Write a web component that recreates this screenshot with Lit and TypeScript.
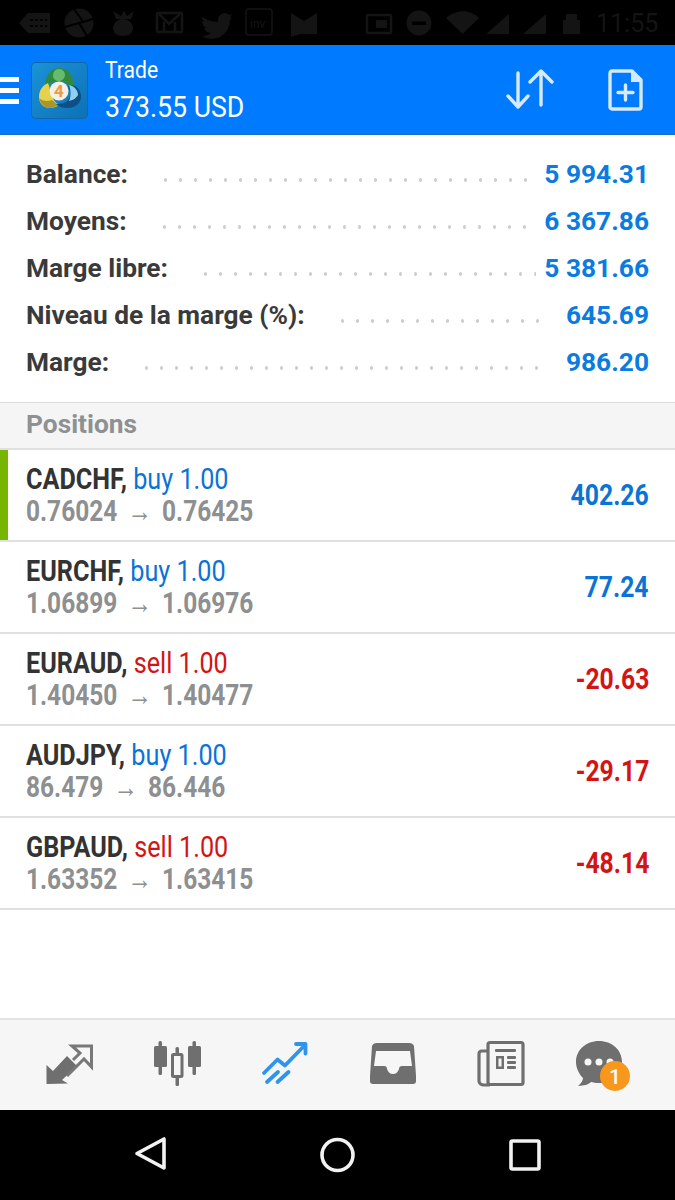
import { LitElement, html, css, svg } from "lit";
import { customElement } from "lit/decorators.js";

const summary = [
  { k: "Balance:", v: "5 994.31" },
  { k: "Moyens:", v: "6 367.86" },
  { k: "Marge libre:", v: "5 381.66" },
  { k: "Niveau de la marge (%):", v: "645.69" },
  { k: "Marge:", v: "986.20" },
];
const rows = [
  { s: "CADCHF,", side: "buy", a: "0.76024", b: "0.76425", p: "402.26", active: true },
  { s: "EURCHF,", side: "buy", a: "1.06899", b: "1.06976", p: "77.24" },
  { s: "EURAUD,", side: "sell", a: "1.40450", b: "1.40477", p: "-20.63" },
  { s: "AUDJPY,", side: "buy", a: "86.479", b: "86.446", p: "-29.17" },
  { s: "GBPAUD,", side: "sell", a: "1.63352", b: "1.63415", p: "-48.14" },
];

const statusLeft = svg`
  <path d="M19 23l9-10h22v20H28z"/>
  <path d="M30 20h17M30 26h17" stroke="#000" stroke-width="2" stroke-dasharray="3 2"/>
  <circle cx="79" cy="23" r="14.500"/>
  <path d="M74 9l10 14M93 19l-14 4M87 36l-8-13M65 27l14-4M69 12v0" stroke="#000" stroke-width="2"/>
  <path d="M113 11l8 5 3-5 3 5 7-5-3 8h-15zM123 19c6 0 10 5 10 9 0 5-4 8-10 8s-10-3-10-8c0-4 4-9 10-9z"/>
  <rect x="157" y="13" width="25" height="19" rx="1" fill="none" stroke="#141414" stroke-width="2.500"/>
  <path d="M159 14l10 10 11-10M164 31v-9M175 31v-9" fill="none" stroke="#141414" stroke-width="2.500"/>
  <path d="M202 17c5 3 11 5 16 5-1-5 3-9 7-9 2 0 3 1 4 2l3-1-2 4 2-1-2 3c0 10-8 19-18 19-4 0-7-1-10-3 3 0 7-1 9-3-4 0-6-3-7-5h3c-3-1-5-4-5-7l3 1c-3-2-4-5-3-5z"/>
  <rect x="246" y="9" width="26" height="26" rx="3" fill="none" stroke="#141414" stroke-width="1.500"/>
  <text x="250" y="28" font-family="Roboto, sans-serif" font-size="12" fill="#141414">inv</text>
  <path d="M291 13l13 8 13-8v21h-17l-9 3z"/>
`;
const statusRight = svg`
  <rect x="367" y="15" width="24" height="18" rx="1" fill="none" stroke="#141414" stroke-width="2.500"/>
  <rect x="376" y="20" width="11" height="8"/>
  <circle cx="419" cy="23" r="12.500"/>
  <rect x="412" y="21.500" width="14" height="3.500" fill="#000"/>
  <path d="M446 18c10-9 24-9 33 0l-16.500 16z"/>
  <path d="M486 34l23-20v20zM523 34l23-20v20z"/>
  <path d="M566 14h11v6h3v14h-17V20h3z"/>
  <text x="596" y="32" font-family="Roboto, sans-serif" font-size="25" fill="#141414">11:55</text>
`;

@customElement("app-root")
export class AppRoot extends LitElement {
  static styles = css`
    :host { display: flex; flex-direction: column; height: 1200px; width: 675px; overflow: hidden; background: #fff; font-family: Roboto, "Liberation Sans", sans-serif; }
    .status { height: 45px; background: #000; flex: none; display: block; }
    .status svg { display: block; fill: #141414; }
    .top { height: 90px; flex: none; background: #007aff; display: flex; align-items: center; color: #fff; border-bottom: 1px solid #1a6fc4; box-sizing: border-box; }
    .burger { width: 19px; margin: 2px 12px 0 0; display: flex; flex-direction: column; gap: 6px; flex: none; }
    .burger i { height: 5px; background: #fff; display: block; }
    .logo { width: 57px; height: 57px; margin-top: 1px; border-radius: 5px; background: linear-gradient(135deg, #1b93d8, #0d70b6); box-shadow: inset 0 0 0 1px #1167a8; flex: none; }
    .logo svg { display: block; }
    .title { margin-left: 17px; flex: 1; display: flex; flex-direction: column; gap: 4px; white-space: nowrap; }
    .t1, .t2 { display: block; transform-origin: left center; }
    .t1 { font-size: 24px; line-height: 30px; transform: scaleX(.88); }
    .t2 { font-size: 29px; line-height: 36px; transform: scaleX(.92); }
    .acts { display: flex; align-items: center; gap: 54px; margin-right: 31px; }
    .acts svg { display: block; }

    .summary { height: 268px; flex: none; box-sizing: border-box; padding-top: 15px; display: flex; flex-direction: column; border-bottom: 1px solid #dcdcdc; }
    .sr { height: 47px; flex: none; display: flex; align-items: center; padding: 0 26px; font-size: 26.300px; font-weight: 700; white-space: nowrap; }
    .sk { color: #3a3a3a; }
    .dots { flex: 1; align-self: center; height: 4px; margin: 12px 8px 0 30px; background-image: radial-gradient(circle, #cfcfcf 1.500px, transparent 2px); background-size: 15px 4px; background-repeat: repeat-x; }
    .dots.short { margin-right: 18px; }
    .sv { color: #0a7be0; }

    .phead { height: 47px; flex: none; box-sizing: border-box; background: #f5f5f5; border-bottom: 2px solid #e0e0e0; display: flex; align-items: center; padding: 0 0 3px 26px; font-size: 26.300px; font-weight: 700; color: #8d9191; }
    .list { flex: 1; }
    .row { height: 92px; box-sizing: border-box; border-bottom: 2px solid #e0e0e0; display: flex; align-items: center; padding: 0 26px 1px; white-space: nowrap; }
    .row.on { box-shadow: inset 8px 0 0 #78b500; }
    .lines { flex: 1; display: flex; flex-direction: column; }
    .l { display: block; font-size: 30px; transform-origin: left center; }
    .l1 { color: #333; font-weight: 700; line-height: 33px; transform: scaleX(.84); }
    .l1 span { font-weight: 400; }
    .buy { color: #0a73d6; }
    .sell { color: #d31414; }
    .l2 { color: #8d8f90; font-weight: 700; line-height: 32px; transform: scaleX(.815); }
    .l2 em { font-style: normal; font-weight: 400; margin: 0 5px; }
    .pl { font-size: 30px; font-weight: 700; transform: scaleX(.825); transform-origin: right center; }
    .pos { color: #0a73d6; }
    .neg { color: #d31414; }

    .tabs { height: 92px; flex: none; box-sizing: border-box; background: #f6f6f6; border-top: 2px solid #e2e2e2; }
    .tabs svg { display: block; }
    .nav { height: 90px; flex: none; background: #000; }
    .nav svg { display: block; }
  `;

  render() {
    return html`
      <div class="status">
        <svg width="675" height="45" viewBox="0 0 675 45">${statusLeft}${statusRight}</svg>
      </div>
      <div class="top">
        <div class="burger"><i></i><i></i><i></i></div>
        <div class="logo">
          <svg width="57" height="57" viewBox="0 0 57 57">
            <path d="M28 6c9 0 14 7 15 17l-3 3c-3-4-7-7-12-7s-9 2-12 6l-2-2c1-10 6-17 14-17z" fill="#2f8a40"/>
            <path d="M28 7c4 0 6 3 6 7-1 3-3 5-6 5s-6-2-6-5c0-4 2-7 6-7z" fill="#66bb6e"/>
            <path d="M8 35c0-7 4-12 9-14 2 4 2 9 4 13 1 4 4 7 7 9-4 3-10 4-14 2-4-2-6-6-6-10z" fill="#e6d14a"/>
            <path d="M8 36c3 3 8 4 13 2l6 5c-4 3-9 4-13 2-3-2-5-5-6-9z" fill="#a8952c"/>
            <path d="M37 24c7-3 12 3 13 9 1 7-5 13-13 13-5 0-9-1-12-4 5 0 10-1 12-4 2-3 3-6 2-9z" fill="#0f4f86"/>
            <path d="M38 23c5 1 9 5 9 10-2 3-4 5-9 6 2-4 2-11 0-16z" fill="#8fd0ee"/>
            <circle cx="28" cy="29" r="9.500" fill="#f6efe6"/>
            <text x="28" y="35" text-anchor="middle" font-family="Roboto, sans-serif" font-size="17" font-weight="700" fill="#ef9a3c">4</text>
          </svg>
        </div>
        <div class="title"><span class="t1">Trade</span><span class="t2">373.55 USD</span></div>
        <div class="acts">
          <svg width="48" height="42" viewBox="0 0 48 42" fill="none" stroke="#d6e9ff" stroke-width="3.400" stroke-linecap="round" stroke-linejoin="round">
            <path d="M12 4v34M2 27l10 11 10-11"/><path d="M35 36V2M24 13L35 2l11 11"/>
          </svg>
          <svg width="36" height="42" viewBox="0 0 36 42">
            <path d="M4 2h20l9 9v27a2 2 0 0 1-2 2H4a2 2 0 0 1-2-2V4a2 2 0 0 1 2-2z" fill="none" stroke="#d6e9ff" stroke-width="3.400" stroke-linejoin="round"/>
            <path d="M23 2l11 11H23z" fill="#d6e9ff"/>
            <path d="M17.500 16v15M10 23.500h15" stroke="#d6e9ff" stroke-width="3.400" stroke-linecap="round"/>
          </svg>
        </div>
      </div>
      <div class="summary">
        ${summary.map(
          (r) => html`<div class="sr"><span class="sk">${r.k}</span><span class="dots ${r.v.length < 8 ? "short" : ""}"></span><span class="sv">${r.v}</span></div>`
        )}
      </div>
      <div class="phead">Positions</div>
      <div class="list">
        ${rows.map(
          (r) => html`<div class="row ${r.active ? "on" : ""}">
            <div class="lines">
              <span class="l l1">${r.s} <span class=${r.side}>${r.side} 1.00</span></span>
              <span class="l l2">${r.a} <em>→</em> ${r.b}</span>
            </div>
            <span class="pl ${r.p.startsWith("-") ? "neg" : "pos"}">${r.p}</span>
          </div>`
        )}
      </div>
      <div class="tabs">
        <svg width="675" height="90" viewBox="0 1020 675 90">
          <path d="M46.500 1084v-19l6.500 6 14-15 10 10-15 14 6 3.500z" fill="#6f6f6f"/>
          <path d="M73 1060l7-7-8-7h19.500v21l-7.500-8-17 17" fill="none" stroke="#787878" stroke-width="3"/>
          <g fill="#6f6f6f">
            <rect x="158.500" y="1041" width="3.500" height="34" rx="1.500"/><rect x="154" y="1046" width="13" height="21" rx="1.500"/>
            <rect x="192.500" y="1041" width="3.500" height="34" rx="1.500"/><rect x="188" y="1046" width="13" height="21" rx="1.500"/>
            <rect x="175.500" y="1047" width="3.500" height="39" rx="1.500"/>
            <rect x="172.500" y="1054.500" width="9.500" height="22" rx="1" fill="#f6f6f6" stroke="#6f6f6f" stroke-width="3"/>
          </g>
          <g fill="none" stroke="#2f95ec" stroke-width="3.800" stroke-linecap="round" stroke-linejoin="round">
            <path d="M264 1073l13.500-13.500 7.500 6 20-20.500M296 1044h9.500v9.500"/>
            <path d="M267 1082l11-10M277.500 1082l11-10"/>
          </g>
          <path d="M377 1043h32c3 0 4 1 5 3l2 30v5c0 2-1 3-3 3h-40c-2 0-3-1-3-3v-5l2-30c1-2 2-3 5-3zM376 1051l-2 15h10c2 0 3 1 3 3 1 3 3 5 6 5s5-2 6-5c0-2 1-3 3-3h10l-2-15z" fill="#6f6f6f" fill-rule="evenodd"/>
          <g fill="none" stroke="#6f6f6f" stroke-width="3.200" stroke-linejoin="round">
            <rect x="488" y="1042.500" width="35" height="42" rx="2"/>
            <path d="M488 1051h-6c-2 0-3 1-3 3v27c0 2 2 4 5 4h6"/>
          </g>
          <g fill="#6f6f6f">
            <rect x="495" y="1049" width="21" height="3" rx="1"/><rect x="496" y="1056" width="8" height="13"/><rect x="507" y="1056" width="9" height="3" rx="1"/><rect x="507" y="1061" width="9" height="3" rx="1"/><rect x="507" y="1066" width="9" height="3" rx="1"/>
          </g>
          <rect x="498.500" y="1058.500" width="3" height="8" fill="#f6f6f6"/>
          <path d="M599 1041c13 0 23 9 23 21 0 12-10 21-23 21-3 0-6-.500-8-1-3 3-7 3.500-13 4 3-3 5-5 5-8-4-4-7-10-7-16 0-12 10-21 23-21z" fill="#6f6f6f"/>
          <circle cx="588" cy="1062" r="3.500" fill="#f6f6f6"/><circle cx="599" cy="1062" r="3.500" fill="#f6f6f6"/><circle cx="610" cy="1062" r="3.500" fill="#f6f6f6"/>
          <circle cx="615" cy="1076" r="15" fill="#f7981c"/>
          <text x="615" y="1084" text-anchor="middle" font-family="Roboto, sans-serif" font-size="21" font-weight="500" fill="#fff">1</text>
        </svg>
      </div>
      <div class="nav">
        <svg width="675" height="90" viewBox="0 1110 675 90" fill="none" stroke="#f2f2f2" stroke-width="3.600" stroke-linejoin="round">
          <path d="M164 1139v29l-27-14.500z"/>
          <circle cx="337.500" cy="1155" r="15.500"/>
          <rect x="511" y="1141" width="28" height="28" rx="1.500"/>
        </svg>
      </div>
    `;
  }
}
